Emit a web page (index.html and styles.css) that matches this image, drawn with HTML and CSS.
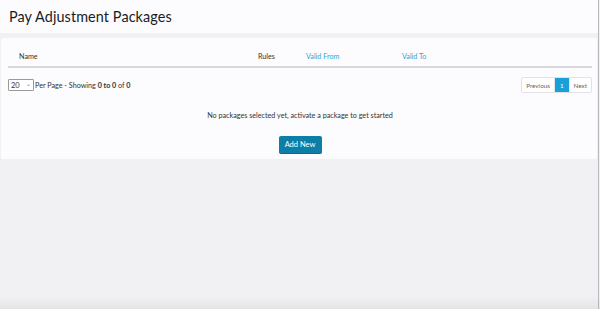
FILE: index.html
```html
<!DOCTYPE html>
<html lang="en">
<head>
  <meta charset="UTF-8" />
  <title>Pay Adjustment Packages</title>
  <link rel="stylesheet" href="styles.css">
</head>
<body>
  <header class="page-header">
    <h1>Pay Adjustment Packages</h1>
  </header>
  <main class="card">
    <div class="table-head">
      <div class="col col-name">Name</div>
      <div class="col col-rules">Rules</div>
      <div class="col col-from sortable">Valid From</div>
      <div class="col col-to sortable">Valid To</div>
    </div>
    <div class="toolbar">
      <div class="per-page">
        <span class="select">20 <span class="caret">&#8964;</span></span>
        <span>Per Page - Showing <b>0 to 0</b> of <b>0</b></span>
      </div>
      <div class="pager">
        <span class="page-btn">Previous</span>
        <span class="page-btn active">1</span>
        <span class="page-btn">Next</span>
      </div>
    </div>
    <p class="empty">No packages selected yet, activate a package to get started</p>
    <div class="actions">
      <button class="btn-primary">Add New</button>
    </div>
  </main>
  <div class="scroll-edge"></div>
</body>
</html>
```

FILE: styles.css
```css
body {
  margin: 0;
  background: linear-gradient(to bottom, #f1f0f2 0, #f1f0f2 296px, #e4e3e6 309px);
  font-family: Lato, "Noto Sans", sans-serif;
  color: #222;
  height: 309px;
  overflow: hidden;
  position: relative;
}
.page-header {
  background: #fcfbfd;
  margin-right: 2px;
  height: 33px;
  padding: 0 9px;
  display: flex;
  align-items: center;
}
h1 {
  margin: 0;
  font-weight: 400;
  font-size: 14.4px;
  color: #1b1b1f;
  letter-spacing: 0.1px;
}
.card {
  background: #fcfbfd;
  margin: 5px 3px 0 1px;
  height: 121px;
  padding: 0 5px 0 7px;
  border-radius: 2px;
  font-size: 7.2px;
}
.table-head {
  display: flex;
  align-items: flex-end;
  padding-bottom: 5px;
  border-bottom: 2px solid #d9d8dc;
  box-sizing: border-box;
  height: 30px;
}
.col { color: #333; }
.col-name { width: 239px; padding-left: 11px; }
.col-rules { width: 48px; }
.col-from { width: 96px; }
.sortable { color: #29a8d6; }
.toolbar {
  display: flex;
  justify-content: space-between;
  align-items: center;
  margin-top: 9px;
}
.per-page {
  display: flex;
  align-items: center;
  gap: 1px;
  color: #333;
}
.per-page b { font-weight: 700; }
.select {
  display: inline-flex;
  align-items: center;
  justify-content: space-between;
  width: 20px;
  height: 10px;
  padding: 0 2px;
  border: 1px solid #9a9a9e;
  border-radius: 1px;
  background: #fff;
  font-size: 7.5px;
}
.caret { font-size: 6px; color: #777; line-height: 6px; margin-top: -3px; }
.pager {
  display: flex;
  border: 1px solid #e2e1e5;
  border-radius: 2px;
  background: #fff;
  height: 14px;
}
.page-btn {
  display: flex;
  align-items: center;
  padding: 0 4px;
  color: #666;
  font-size: 6.3px;
}
.page-btn + .page-btn { border-left: 1px solid #e6e5e9; }
.page-btn.active {
  background: #1aa0d8;
  color: #fff;
  padding: 0 5px;
}
.empty {
  margin: 18px 0 0;
  text-align: center;
  color: #333;
}
.actions {
  display: flex;
  justify-content: center;
  margin-top: 16px;
}
.btn-primary {
  background: #0d7ea6;
  color: #fff;
  border: none;
  border-radius: 2px;
  font-family: inherit;
  font-size: 7.5px;
  width: 43px;
  height: 17px;
  padding: 0;
  box-shadow: 0 1px 0 #086a8c;
}
.scroll-edge {
  position: absolute;
  top: 0;
  right: 1px;
  width: 1px;
  height: 100%;
  background: #b9b8bc;
}
```
